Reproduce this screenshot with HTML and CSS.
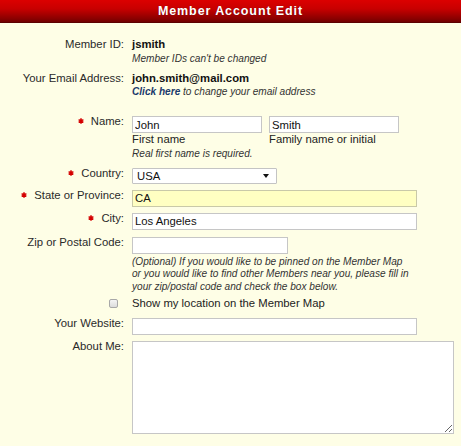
FILE: index.html
```html
<!DOCTYPE html>
<html>
<head>
<meta charset="utf-8">
<link rel="stylesheet" href="styles.css">
</head>
<body>
<div class="hdr">Member Account Edit</div>
<div class="form">
  <div class="row r-id">
    <div class="lbl">Member ID:</div>
    <div class="val"><div class="strong">jsmith</div><div class="note">Member IDs can't be changed</div></div>
  </div>
  <div class="row r-email">
    <div class="lbl">Your Email Address:</div>
    <div class="val"><div class="strong">john.smith@mail.com</div><div class="note"><a class="link" href="#">Click here</a> to change your email address</div></div>
  </div>
  <div class="row r-name">
    <div class="lbl"><svg class="req" viewBox="0 0 6 6"><path d="M3 0.2V5.8M0.6 1.6L5.4 4.4M0.6 4.4L5.4 1.6"/></svg>Name:</div>
    <div class="val">
      <div class="pair">
        <div><input class="in w130" type="text" value="John"><div class="sub">First name</div></div>
        <div><input class="in w130" type="text" value="Smith"><div class="sub">Family name or initial</div></div>
      </div>
      <div class="note">Real first name is required.</div>
    </div>
  </div>
  <div class="row r-country">
    <div class="lbl"><svg class="req" viewBox="0 0 6 6"><path d="M3 0.2V5.8M0.6 1.6L5.4 4.4M0.6 4.4L5.4 1.6"/></svg>Country:</div>
    <div class="val"><span class="selwrap"><select class="sel"><option>USA</option></select></span></div>
  </div>
  <div class="row r-state">
    <div class="lbl"><svg class="req" viewBox="0 0 6 6"><path d="M3 0.2V5.8M0.6 1.6L5.4 4.4M0.6 4.4L5.4 1.6"/></svg>State or Province:</div>
    <div class="val"><input class="in w285 hl" type="text" value="CA"></div>
  </div>
  <div class="row r-city">
    <div class="lbl"><svg class="req" viewBox="0 0 6 6"><path d="M3 0.2V5.8M0.6 1.6L5.4 4.4M0.6 4.4L5.4 1.6"/></svg>City:</div>
    <div class="val"><input class="in w285" type="text" value="Los Angeles"></div>
  </div>
  <div class="row r-zip">
    <div class="lbl">Zip or Postal Code:</div>
    <div class="val"><input class="in w156" type="text" value="">
      <div class="note opt">(Optional) If you would like to be pinned on the Member Map<br>or you would like to find other Members near you, please fill in<br>your zip/postal code and check the box below.</div>
    </div>
  </div>
  <div class="row r-check">
    <div class="lbl"><input class="cb" type="checkbox"></div>
    <div class="val"><span class="plain">Show my location on the Member Map</span></div>
  </div>
  <div class="row r-web">
    <div class="lbl">Your Website:</div>
    <div class="val"><input class="in w285" type="text" value=""></div>
  </div>
  <div class="row r-about">
    <div class="lbl">About Me:</div>
    <div class="val"><textarea class="ta"></textarea></div>
  </div>
</div>
</body>
</html>
```
FILE: styles.css
```css
html, body {
  margin: 0;
  padding: 0;
}
body {
  background: #fefee6;
  font-family: "Liberation Sans", Arial, sans-serif;
  font-size: 11.3px;
  color: #2a2a2a;
  width: 461px;
  height: 446px;
  overflow: hidden;
}
.hdr {
  height: 22px;
  line-height: 22px;
  border-bottom: 1px solid #5c0000;
  background: linear-gradient(#dc0000 0%, #c80000 40%, #8a0000 85%, #700000 100%);
  color: #fff;
  font-weight: bold;
  font-size: 12.5px;
  letter-spacing: 0.9px;
  text-align: center;
  text-shadow: 0 0 1px rgba(80,0,0,0.6);
}
.form {
  padding-top: 14px;
}
.row {
  display: grid;
  grid-template-columns: 124px 1fr;
  column-gap: 8px;
}
.lbl {
  text-align: right;
  line-height: 15px;
  white-space: nowrap;
  color: #2a2a2a;
}
.val {
  line-height: 15px;
}
.strong {
  font-weight: bold;
  color: #111;
  line-height: 15px;
}
.note {
  font-style: italic;
  font-size: 10.1px;
  line-height: 12.5px;
  color: #333;
}
.r-id .note { margin-top: 1px; }
.link {
  color: #1b3a6b;
  font-weight: bold;
  text-decoration: none;
}
.r-email { margin-top: 5px; }
.r-name { margin-top: 16px; }
.r-country { margin-top: 5px; }
.r-state { margin-top: 4px; }
.r-city { margin-top: 4px; }
.r-zip { margin-top: 5px; }
.r-check { margin-top: 3px; }
.r-web { margin-top: 5px; }
.r-about { margin-top: 4px; }

.req {
  width: 6px;
  height: 6px;
  margin-right: 7px;
  vertical-align: 1px;
  stroke: #d40000;
  stroke-width: 1.5;
  fill: none;
}
.in {
  display: block;
  box-sizing: border-box;
  height: 17px;
  margin: 2px 0 0 0;
  padding: 0 2px;
  border: 1px solid #c6c6c6;
  border-radius: 0;
  background: #fff;
  font-family: "Liberation Sans", Arial, sans-serif;
  font-size: 11.3px;
  color: #111;
  outline: none;
}
.hl { background: #ffffc2; border-color: #c9c9a8; }
.w130 { width: 130px; }
.w156 { width: 156px; }
.w285 { width: 285px; }
.pair {
  display: grid;
  grid-template-columns: 130px 130px;
  column-gap: 7px;
}
.sub {
  line-height: 13px;
  color: #222;
  white-space: nowrap;
}
.pair + .note { margin-top: 2px; }
.selwrap {
  display: block;
  position: relative;
  width: 145px;
  margin-top: 2px;
}
.sel {
  display: block;
  -webkit-appearance: none;
  appearance: none;
  box-sizing: border-box;
  width: 145px;
  height: 16px;
  margin: 0;
  padding: 0 0 0 4px;
  border: 1px solid #c4c4c4;
  border-radius: 1px;
  background: #fff;
  font-family: "Liberation Sans", Arial, sans-serif;
  font-size: 11.3px;
  color: #111;
  line-height: 14px;
}
.selwrap::after {
  content: "";
  position: absolute;
  right: 8px;
  top: 6px;
  width: 0;
  height: 0;
  border-left: 3px solid transparent;
  border-right: 3px solid transparent;
  border-top: 4px solid #111;
  pointer-events: none;
}
.opt {
  margin-top: 2px;
  white-space: nowrap;
}
.cb {
  -webkit-appearance: none;
  appearance: none;
  box-sizing: border-box;
  width: 9px;
  height: 9px;
  margin: 3px 6px 0 0;
  padding: 0;
  vertical-align: top;
  border: 1px solid #a8a8a8;
  border-radius: 2px;
  background: linear-gradient(#f4f4f4, #dcdcdc);
}
.plain {
  color: #222;
}
.ta {
  display: block;
  box-sizing: border-box;
  width: 322px;
  height: 93px;
  margin: 2px 0 0 0;
  padding: 2px;
  border: 1px solid #c6c6c6;
  background: #fff;
  font-family: "Liberation Sans", Arial, sans-serif;
  font-size: 11.3px;
  outline: none;
}
```
